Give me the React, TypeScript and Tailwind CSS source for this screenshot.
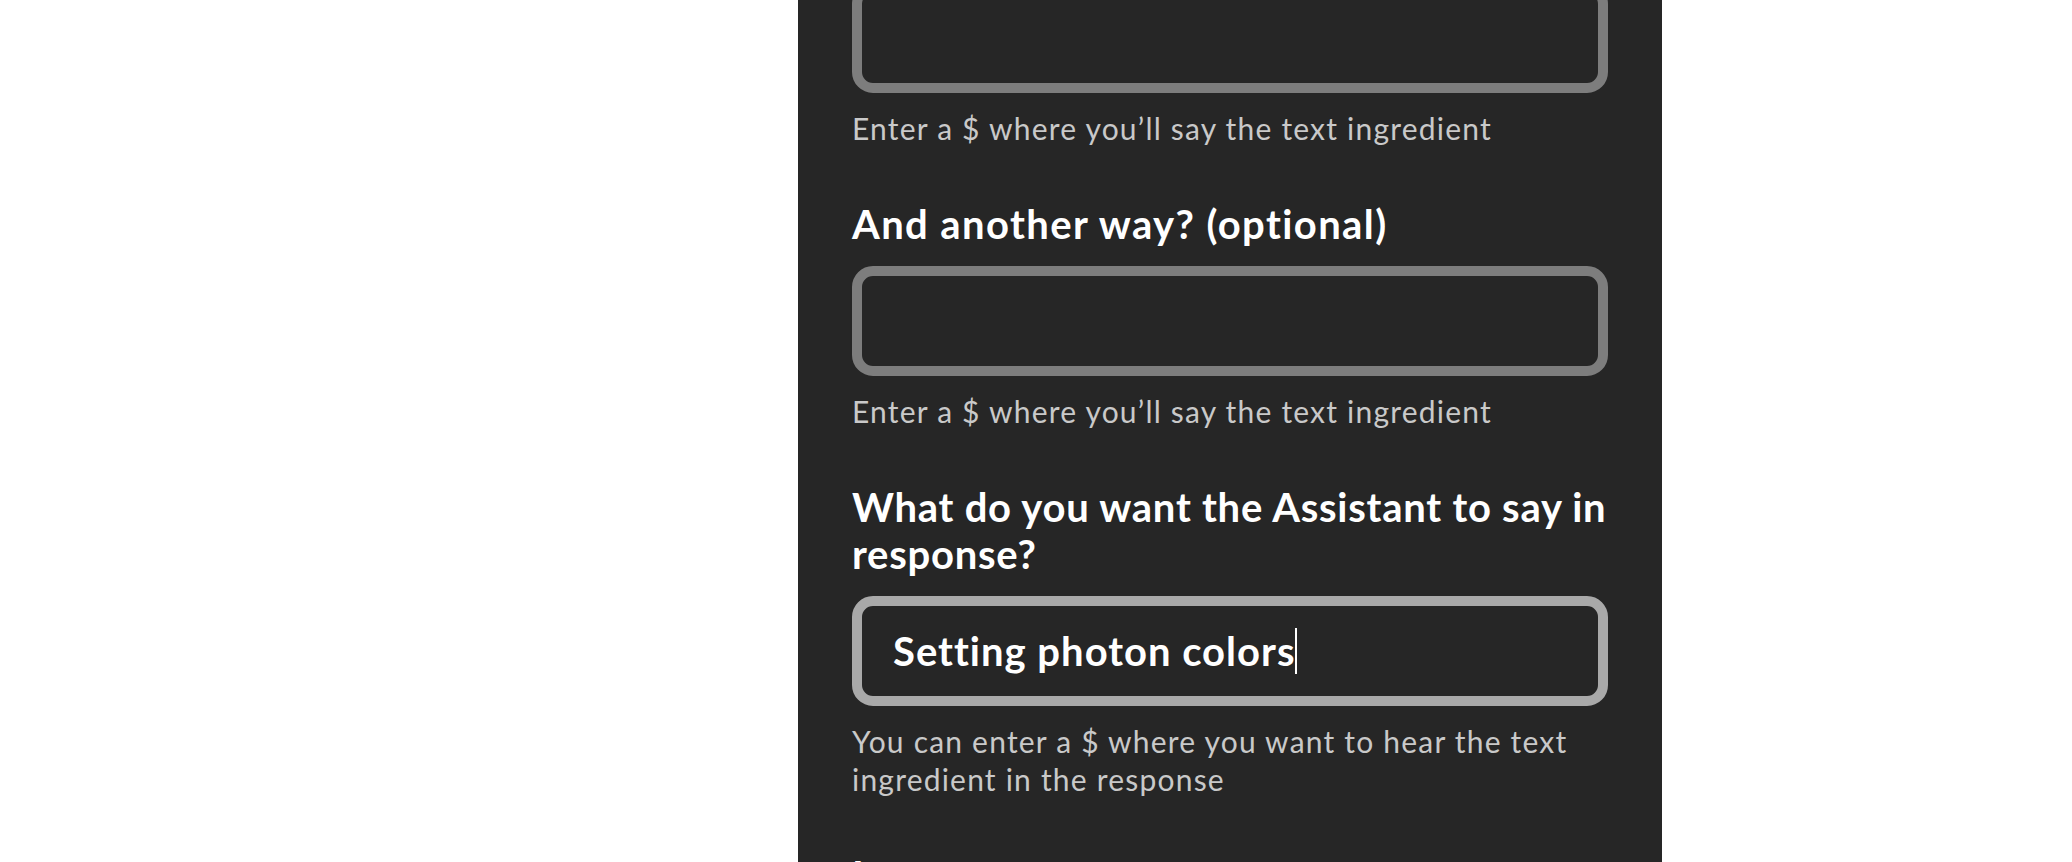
import React from "react";

const font = { fontFamily: '"Lato", "Noto Sans", sans-serif' };

function Label({ children, track }: { children: React.ReactNode; track: string }) {
  return (
    <div
      className={
        "text-[40px] leading-[47px] font-bold text-white mb-[18px] whitespace-nowrap " + track
      }
    >
      {children}
    </div>
  );
}

function Helper({ children }: { children: React.ReactNode }) {
  return (
    <div className="text-[30px] leading-[38px] text-[#c9c9c9] tracking-[1.2px]">{children}</div>
  );
}

function Input({ value, focused }: { value?: string; focused?: boolean }) {
  return (
    <div
      className={
        "h-[110px] rounded-[21px] border-[10px] flex items-center pl-[31px] mb-[16px] " +
        (focused ? "border-[#a9a9a9]" : "border-[#7d7d7d]")
      }
    >
      {value ? (
        <>
          <span className="text-[40px] font-bold text-white leading-none tracking-[1px]">{value}</span>
          <span className="w-[2px] h-[46px] bg-white" />
        </>
      ) : null}
    </div>
  );
}

export default function App() {
  return (
    <div className="w-[2072px] h-[862px] bg-white overflow-hidden" style={font}>
      <div className="ml-[798px] w-[864px] h-[862px] bg-[#262626] px-[54px] flex flex-col overflow-hidden">
        <div className="-mt-[17px]">
          <Input />
          <Helper>Enter a $ where you’ll say the text ingredient</Helper>

          <div className="mt-[54px]">
            <Label track="tracking-[1.4px]">And another way? (optional)</Label>
            <Input />
            <Helper>Enter a $ where you’ll say the text ingredient</Helper>
          </div>

          <div className="mt-[54px]">
            <Label track="tracking-[0.75px]">
              What do you want the Assistant to say in
              <br />
              response?
            </Label>
            <Input value="Setting photon colors" focused />
            <Helper>
              You can enter a $ where you want to hear the text ingredient in the response
            </Helper>
          </div>

          <div className="mt-[54px]">
            <Label track="tracking-[1px]">Language</Label>
          </div>
        </div>
      </div>
    </div>
  );
}
